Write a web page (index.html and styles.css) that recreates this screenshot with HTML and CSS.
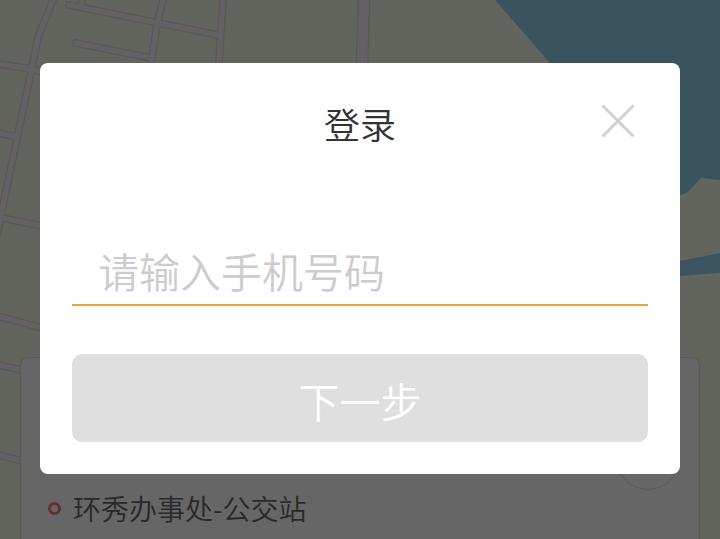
FILE: index.html
```html
<!DOCTYPE html>
<html lang="zh-CN">
<head>
    <meta charset="UTF-8">
    <meta name="viewport" content="width=device-width, initial-scale=1.0">
    <title>登录</title>
    <link rel="stylesheet" href="styles.css">
</head>
<body>
<main class="map-page">
    <svg class="map" viewBox="0 0 720 539" preserveAspectRatio="xMidYMin slice" aria-hidden="true">
        <!-- Water -->
        <path class="water" d="M495 0H720V180L701 178L687 193L680 195L600 195L550 63Z"/>
        <path class="river" d="M600 277L680 261L720 253V273L680 276Z"/>
        <!-- Roads -->
        <g class="road-edge">
            <path d="M53 0L38 37L32 67L1 215L-6 250"/>
            <path d="M69 5L158 23L218 35M82 0L81 7"/>
            <path d="M76 43L151 58M163 0L157 24L151 64"/>
            <path d="M223 0L219 63"/>
            <path d="M-2 64L32 69L42 72M-2 133L18 137M2 218L42 226"/>
            <path d="M-2 316L42 328M-2 365L22 370M-2 455L22 461"/>
        </g>
        <path class="road-edge wide" d="M364 -2L362 66"/>
        <g class="road">
            <path d="M53 0L38 37L32 67L1 215L-6 250"/>
            <path d="M69 5L158 23L218 35M82 0L81 7"/>
            <path d="M76 43L151 58M163 0L157 24L151 64"/>
            <path d="M223 0L219 63"/>
            <path d="M-2 64L32 69L42 72M-2 133L18 137M2 218L42 226"/>
            <path d="M-2 316L42 328M-2 365L22 370M-2 455L22 461"/>
        </g>
        <path class="road wide" d="M364 -2L362 66"/>
    </svg>

    <!-- Trip card -->
    <section class="trip-card">
        <button type="button" class="locate" aria-label="定位"></button>
        <div class="start">
            <span class="dot"></span>
            <span>环秀办事处-公交站</span>
        </div>
    </section>
</main>

<!-- Login dialog -->
<div class="overlay">
    <form class="dialog" role="dialog" aria-labelledby="login-title">
        <div class="dialog-header">
            <h1 id="login-title">登录</h1>
            <button type="button" class="close" aria-label="关闭">
                <svg width="34" height="34" viewBox="0 0 34 34"><path d="M1.5 1.5L32.5 32.5M32.5 1.5L1.5 32.5"/></svg>
            </button>
        </div>
        <input type="tel" id="phone" name="phone" placeholder="请输入手机号码" aria-label="请输入手机号码">
        <button type="submit" class="next" disabled>下一步</button>
    </form>
</div>
</body>
</html>
```
FILE: styles.css
```css
* {
    box-sizing: border-box;
}
body {
    margin: 0;
    font-family: "Noto Sans CJK SC", sans-serif;
    font-weight: 350;
}
button, input {
    font-family: inherit;
    font-weight: inherit;
}

/* Map */
.map-page {
    position: relative;
    display: flex;
    flex-direction: column;
    justify-content: flex-end;
    min-height: 100vh;
    padding: 0 20px;
    background: #f5fce8;
    overflow: hidden;
}
.map {
    position: absolute;
    inset: 0;
    width: 100%;
    height: 100%;
}
.water { fill: #8fd0ed; }
.river { fill: #98d3f2; }
.road, .road-edge {
    fill: none;
    stroke-linecap: round;
    stroke-linejoin: round;
}
.road {
    stroke: #f8f3f8;
    stroke-width: 5;
}
.road-edge {
    stroke: #dfe2d6;
    stroke-width: 8;
}
.road.wide { stroke-width: 10; }
.road-edge.wide { stroke-width: 13; }

/* Trip card */
.trip-card {
    position: relative;
    padding: 68px 19px 13px 27px;
    background: white;
    border: 1px solid #e0e0e0;
    border-bottom: none;
    border-radius: 8px 8px 0 0;
}
.locate {
    display: block;
    width: 64px;
    height: 64px;
    margin-left: auto;
    background: white;
    border: 1px solid #e0e0e0;
    border-radius: 50%;
}
.start {
    display: flex;
    align-items: center;
    gap: 12px;
    height: 36px;
    color: #666;
    font-size: 28px;
    line-height: 36px;
}
.dot {
    width: 13px;
    height: 13px;
    border: 3px solid #ff7676;
    border-radius: 50%;
}

/* Login dialog */
.overlay {
    position: fixed;
    inset: 0;
    padding: 63px 40px;
    background: rgba(0, 0, 0, 0.6);
}
.dialog {
    padding: 32px;
    background: white;
    border-radius: 8px;
}
.dialog-header {
    display: grid;
    grid-template-columns: 60px 1fr 60px;
    height: 60px;
    margin-bottom: 85px;
}
.dialog-header h1 {
    grid-column: 2;
    margin: 0;
    color: #333;
    font-size: 36px;
    font-weight: 350;
    line-height: 56px;
    text-align: center;
}
.close {
    display: flex;
    align-items: center;
    justify-content: center;
    height: 52px;
    padding: 0;
    background: none;
    border: none;
    cursor: pointer;
}
.close path {
    stroke: #d0d0d0;
    stroke-width: 3;
}
.dialog input {
    display: block;
    width: 100%;
    height: 66px;
    padding: 0 26px 4px;
    border: none;
    border-bottom: 2px solid #f0a03c;
    border-radius: 0;
    color: #333;
    font-size: 41px;
    outline: none;
}
.dialog input::placeholder {
    color: #ccc;
    opacity: 1;
}
.next {
    display: block;
    width: 100%;
    height: 88px;
    margin-top: 48px;
    padding: 4px 0 0;
    background: #dfdfdf;
    border: none;
    border-radius: 10px;
    color: white;
    font-size: 41px;
}
```
